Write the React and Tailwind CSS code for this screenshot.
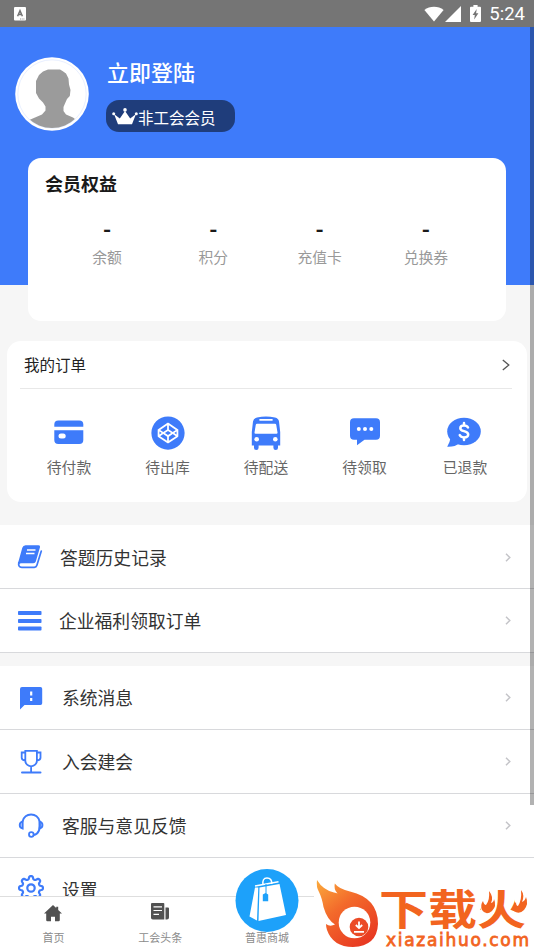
import { AiFillCodepenCircle } from 'react-icons/ai';

const STATS = ['余额', '积分', '充值卡', '兑换券'];

// ── Status bar ────────────────────────────────────────────────
const StatusBar = () => (
  <div className="flex h-[27px] items-center justify-between bg-[#757575] pl-[14px] pr-[9px] text-white">
    <svg className="h-[14px] w-3" viewBox="0 0 12 14">
      <rect width="12" height="13.5" rx="1" fill="#fff" />
      <path d="M3.6 9.2L6 3.6l2.4 5.6M4.4 7.6h3.2" fill="none" stroke="#757575" strokeWidth="1.5" />
      <path d="M6 12h5" stroke="#757575" strokeWidth="0.8" strokeDasharray="1 0.7" />
    </svg>
    <div className="flex items-center">
      <svg className="h-4 w-5" viewBox="0 0 20 16">
        <path d="M0.4 4C5.6-.3 14.4-.3 19.6 4L10 15.6z" fill="#fff" />
      </svg>
      <svg className="ml-[1px] h-4 w-4" viewBox="0 0 16 16">
        <path d="M16 0v16H0z" fill="#fff" />
      </svg>
      <svg className="ml-[9px] h-[17px] w-[11px]" viewBox="0 0 11 17">
        <path d="M3.4 0h4.2v1.8H10q1 0 1 1V16q0 1-1 1H1q-1 0-1-1V2.8q0-1 1-1h2.4z" fill="#fff" />
        <path d="M6.7 4L2.6 10h2.2l-.6 4.4L8.4 8.3H6.1z" fill="#757575" />
      </svg>
      <span className="ml-[8px] pt-[2px] font-['Roboto',sans-serif] text-[18.5px] leading-[25px]">5:24</span>
    </div>
  </div>
);

// ── Profile ───────────────────────────────────────────────────
const Avatar = () => (
  <svg className="h-[74px] w-[74px] shrink-0" viewBox="0 0 74 74">
    <clipPath id="face"><circle cx="37" cy="37" r="34" /></clipPath>
    <circle cx="37" cy="37" r="36.8" fill="#fff" />
    <circle cx="37" cy="37" r="34.2" fill="none" stroke="#d8e4ff" strokeWidth="0.6" />
    <path
      clipPath="url(#face)"
      d="M33 12.500h12l2.500 1.500 3.500 2.500 2.500 5 .5 6 1.500 5.500-.7 6-2.800 3-2 4.500-1.500 3.500v4l2.500 3.500 7 3 6 4.500V73H12v-9l8-3.500 7-3 3.500-4v-4l-2.500-4-4-4-3-5.500V24l3-6 4-3.500z"
      fill="#9b9b9b"
    />
  </svg>
);

const Crown = () => (
  <svg className="h-[17px] w-[26px]" viewBox="0 0 26 17" fill="#fff">
    <path d="M2 6l5.800 4.500L13 3l5.200 7.500L24 6l-4 10.300H6z" />
    <circle cx="1.700" cy="5.800" r="1.500" />
    <circle cx="13" cy="1.900" r="1.800" />
    <circle cx="24.300" cy="5.800" r="1.500" />
  </svg>
);

const Profile = () => (
  <div className="flex h-[131px] items-start pl-[15px] pt-[30px]">
    <Avatar />
    <div className="ml-[17px]">
      <p className="-mt-[2px] ml-[1px] text-[22px] font-medium leading-[32px] text-white">立即登陆</p>
      <div className="mt-[13px] flex h-8 w-[129px] items-center rounded-[13px] bg-[#1f3d7b] pl-[6px] text-white">
        <Crown />
        <span className="pt-[1px] text-[15.500px] leading-8">非工会会员</span>
      </div>
    </div>
  </div>
);

const Benefits = () => (
  <div className="mx-[28px] h-[163px] rounded-[13px] bg-white">
    <h2 className="pl-[17px] pt-[12px] text-[18px] font-bold leading-[26px] text-[#1a1a1a]">会员权益</h2>
    <div className="mt-[17px] grid grid-cols-4 pl-[26px] pr-[27px] text-center">
      {STATS.map(label => (
        <div key={label}>
          <p className="text-[22px] font-bold leading-[28px] text-[#1a1a1a]">-</p>
          <p className="pt-[2px] text-[14.800px] leading-[28px] text-[#999]">{label}</p>
        </div>
      ))}
    </div>
  </div>
);

// ── Orders ────────────────────────────────────────────────────
const CardIcon = () => (
  <svg className="h-9 w-9" viewBox="0 0 36 36" fill="#3e7bfa">
    <path d="M3.300 11.800V9.500q0-4 4-4h21q4 0 4 4v2.300z" />
    <path fillRule="evenodd" d="M3.300 15.300h29v9.700q0 4-4 4h-21q-4 0-4-4zm6.700 3.200q-2.500 0-2.500 2.500T10 23.500h2.200q2.500 0 2.500-2.500t-2.500-2.500z" />
  </svg>
);

const BusIcon = () => (
  <svg className="h-9 w-9" viewBox="0 0 36 36">
    <path d="M3.800 30V17L5 6.500Q5.500 3.200 9 2.400q9-2 18 0 3.500 .8 4 4.100L32.200 17v13.500H30v2.300a2.200 2.200 0 0 1-4.600 0v-2.300H10.600v2.300a2.200 2.200 0 0 1-4.600 0v-2.300H3.800z" fill="#3e7bfa" />
    <path d="M12 4.900h12" stroke="#fff" strokeWidth="1.600" strokeLinecap="round" />
    <path d="M9 8.800h18q1 0 1.200 1l1.300 7.800q.1 1.200-1 1.200H7.500q-1.100 0-1-1.200l1.300-7.800q.2-1 1.200-1z" fill="#fff" />
    <circle cx="8.700" cy="24.300" r="2.300" fill="#fff" />
    <circle cx="27.300" cy="24.300" r="2.300" fill="#fff" />
  </svg>
);

const ChatIcon = () => (
  <svg className="h-9 w-9" viewBox="0 0 36 36">
    <path d="M7 3.300h22q4 0 4 4v13.500q0 4-4 4H17.500L10 30.300v-5.500H7q-4 0-4-4V7.300q0-4 4-4z" fill="#3e7bfa" />
    <g fill="#fff"><circle cx="11.800" cy="14" r="2" /><circle cx="18" cy="14" r="2" /><circle cx="24.300" cy="14" r="2" /></g>
  </svg>
);

const RefundIcon = () => (
  <svg className="ml-[-3px] h-9 w-9" viewBox="0 0 36 36">
    <ellipse cx="18" cy="16.500" rx="16.800" ry="13.700" fill="#3e7bfa" />
    <path d="M4.500 23q-.5 4-3.300 8.800 8 .3 12-3.500z" fill="#3e7bfa" />
    <path d="M22 12.500q-1-2-4-2-3.700 0-3.700 2.700 0 2 3.700 2.900 4.200 1 4.200 3.400 0 2.900-4.200 2.900-3.300 0-4.300-2.300M18 8v2.500m0 12V25" fill="none" stroke="#fff" strokeWidth="2.500" strokeLinecap="round" />
  </svg>
);

const ORDERS = [
  { label: '待付款', icon: <CardIcon /> },
  { label: '待出库', icon: <AiFillCodepenCircle className="-my-[1px] h-[38px] w-[38px] text-[#3e7bfa]" /> },
  { label: '待配送', icon: <BusIcon /> },
  { label: '待领取', icon: <ChatIcon /> },
  { label: '已退款', icon: <RefundIcon /> },
];

const Orders = () => (
  <div className="ml-[7px] mr-[7px] mt-[20px] h-[161px] rounded-[14px] bg-white pl-[13px] pr-[15px]">
    <div className="flex h-12 items-center justify-between border-b border-[#e8e8e8] pl-1 pr-[2px]">
      <span className="pt-[1px] text-[15.500px] text-[#222]">我的订单</span>
      <svg className="h-3 w-2" viewBox="0 0 8 12">
        <path d="M0.800 1l6 5-6 5" fill="none" stroke="#555" strokeWidth="1.300" />
      </svg>
    </div>
    <div className="mt-[26px] grid grid-cols-[98px_99px_98px_99px_102px]">
      {ORDERS.map(({ label, icon }) => (
        <div key={label} className="flex flex-col items-center">
          {icon}
          <span className="mt-[4px] text-[14.800px] leading-6 text-[#666]">{label}</span>
        </div>
      ))}
    </div>
  </div>
);

// ── Menu rows ─────────────────────────────────────────────────
const BookIcon = () => (
  <svg className="h-[26px] w-[26px]" viewBox="0 0 26 26">
    <path d="M8.500 1.200h13q2 0 1.500 2l-4.200 14.300q-.5 1.800-2.500 1.800H4.500q-2 0-2.500 1.200l-.8-2L5.300 3.700q.8-2.500 3.200-2.500z" fill="#3e7bfa" />
    <path d="M1.800 18.500q-.8 4.800 3 4.800h12.500q2 0 2.600-2L24.300 7" fill="none" stroke="#3e7bfa" strokeWidth="1.700" strokeLinecap="round" />
    <path d="M10 6h8.500M9 9.500h8.500" stroke="#fff" strokeWidth="1.400" />
  </svg>
);

const BarsIcon = () => (
  <svg className="h-[26px] w-[26px]" viewBox="0 0 26 26" fill="#3e7bfa">
    <rect x="1" y="3" width="23.500" height="4" rx="0.800" />
    <rect x="1" y="11" width="23.500" height="4" rx="0.800" />
    <rect x="1" y="18.500" width="23.500" height="4" rx="0.800" />
  </svg>
);

const NoticeIcon = () => (
  <svg className="h-[26px] w-[26px]" viewBox="0 0 26 26">
    <path d="M4 2h18.500q1.700 0 1.700 1.700v14.600q0 1.700-1.700 1.700H6.500L2 24.500V4q0-2 2-2z" fill="#3e7bfa" />
    <path d="M13.200 6.500v4m0 2.500v3" stroke="#fff" strokeWidth="2.200" />
  </svg>
);

const TrophyIcon = () => (
  <svg className="h-[26px] w-[26px]" viewBox="0 0 26 26" fill="none" stroke="#3e7bfa" strokeWidth="1.800">
    <path d="M7.300 1.800h11.600v9.900q0 4.500-5.800 5.600-5.800-1.100-5.800-5.600zM7.300 3.500H3.700v5.300q0 2.400 3.600 2.900M18.900 3.500h3.600v5.300q0 2.400-3.600 2.900M13.100 17.500V23" />
    <path d="M4 23.500h18.500" strokeWidth="2" strokeLinecap="round" />
  </svg>
);

const HeadsetIcon = () => (
  <svg className="h-[26px] w-[26px]" viewBox="0 0 26 26" fill="none" stroke="#3e7bfa" strokeWidth="1.800">
    <path d="M4.500 8.500q2-7 8.600-7t8.600 7q1.300 12-6 13.500" />
    <path d="M4.700 8.300v7.300q-3-.7-3-3.600t3-3.700zM21.500 8.300v7.300q3-.7 3-3.600t-3-3.700z" fill="#3e7bfa" fillOpacity="0.400" />
    <circle cx="13.300" cy="21.500" r="2.300" />
  </svg>
);

// eight-lobed outline, sampled around the circle
const GEAR_POINTS = Array.from({ length: 160 }, (_, i) => {
  const a = (i / 160) * Math.PI * 2;
  const r = 10.4 + 1.6 * Math.tanh(1.8 * Math.cos(8 * a));
  return `${(13 + r * Math.sin(a)).toFixed(2)},${(13 - r * Math.cos(a)).toFixed(2)}`;
}).join(' ');

const GearIcon = () => (
  <svg className="-mt-[3px] h-[26px] w-[26px] overflow-visible" viewBox="0 0 26 26" fill="none" stroke="#3e7bfa" strokeWidth="2.200">
    <polygon points={GEAR_POINTS} strokeLinejoin="round" />
    <circle cx="13" cy="13" r="3.700" />
  </svg>
);

const MENU_TOP = [
  { label: '答题历史记录', icon: <BookIcon />, gap: 'pl-[17px] gap-[17px] pt-[1px]' },
  { label: '企业福利领取订单', icon: <BarsIcon />, gap: 'pl-[17px] gap-[16px]' },
];

const MENU_BOTTOM = [
  { label: '系统消息', icon: <NoticeIcon />, gap: 'pl-[18px] gap-[18px]' },
  { label: '入会建会', icon: <TrophyIcon />, gap: 'pl-[18px] gap-[18px]' },
  { label: '客服与意见反馈', icon: <HeadsetIcon />, gap: 'pl-[18px] gap-[18px]' },
  { label: '设置', icon: <GearIcon />, gap: 'pl-[18px] gap-[18px]' },
];

const MenuRow = ({ label, icon, gap }) => (
  <div className={`flex h-[64px] shrink-0 items-center border-b border-[#d8d9dc] bg-white pr-[23px] ${gap}`}>
    {icon}
    <span className="flex-1 text-[17.800px] text-[#333]">{label}</span>
    <svg className="h-[9px] w-[6px]" viewBox="0 0 6 9">
      <path d="M1 0.700l3.800 3.800L1 8.300" fill="none" stroke="#c4c4c8" strokeWidth="1.500" />
    </svg>
  </div>
);

// ── Bottom tabs ───────────────────────────────────────────────
const HomeIcon = () => (
  <svg className="h-[18px] w-5" viewBox="0 0 20 18" fill="#515151">
    <path d="M10 1L1 9.600h2.200V16q0 1.200 1.200 1.200H8v-4.500h4v4.500h3.600q1.200 0 1.200-1.200V9.600H19l-3.800-3.700V2.800h-2v1.300z" />
  </svg>
);

const NewsIcon = () => (
  <svg className="-mt-[1px] h-[18px] w-5" viewBox="0 0 20 18">
    <path d="M2 0h11.500q.8 0 .8.800V16.500H2.800Q1 16.500 1 14.700V1q0-1 1-1zM15.500 4.500H18q1 0 1 1v9q0 2-2 2h-1.500z" fill="#515151" />
    <path d="M3.500 3.800h8.500M3.500 7.500h8.500M3.500 11.300h5.500" stroke="#fff" strokeWidth="1.200" />
  </svg>
);

const MallButton = () => (
  <svg className="absolute -top-[29px] left-1/2 h-16 w-16 -translate-x-1/2" viewBox="0 0 64 64">
    <circle cx="32" cy="32.500" r="31.500" fill="#1da1fa" />
    <path d="M28 17q-1-7 4-7t4.800 6" fill="none" stroke="#fff" strokeWidth="1.500" />
    <path d="M20 19.500l-5.500 29L22 52.500l1.300-33zM24.500 19.500L44.500 16l6.500 31L23.500 53z" fill="#fff" />
    <path d="M20 18l23.500-4.200" stroke="#fff" strokeWidth="1.500" />
    <path d="M31 16v10" stroke="#1da1fa" strokeWidth="1" />
    <path d="M30.500 25l2.700 1.500v6.700h-5.400v-6.700z" fill="#1da1fa" />
  </svg>
);

const TABS = [
  { label: '首页', icon: <HomeIcon /> },
  { label: '工会头条', icon: <NewsIcon /> },
  { label: '普惠商城', icon: <MallButton /> },
];

const TabBar = () => (
  <div className="relative grid h-[54px] shrink-0 grid-cols-5 border-t border-[#dedede] bg-white">
    {TABS.map(({ label, icon }) => (
      <div key={label} className="relative flex flex-col items-center pt-[7px]">
        <div className="h-[18px]">{icon}</div>
        <span className="relative mt-[7px] text-[11px] leading-4 text-[#8b8b8b]">{label}</span>
      </div>
    ))}
  </div>
);

// ── Site badge ────────────────────────────────────────────────
const SiteBadge = () => (
  <div className="absolute bottom-0 right-0 flex h-[74px] w-[220px] bg-white">
    <svg className="mt-[2px] h-[70px] w-[65px] shrink-0" viewBox="0 0 65 70">
      <defs>
        <linearGradient id="flame" x1="0" y1="0" x2="0.700" y2="1">
          <stop offset="0" stopColor="#fbab3c" />
          <stop offset="0.450" stopColor="#f36a2b" />
          <stop offset="1" stopColor="#e83a22" />
        </linearGradient>
      </defs>
      <path d="M3 2q6 10 17 12.500 2.500.5 3.500 1-4-4-2.700-10Q25 11 36 13.500 64 20 64 46 63 68 39 69 19 69 13 52q-1-3-1-6 4 3 9 .5-8-5-11.500-17.500Q8 20 5 14 2 9 3 2z" fill="url(#flame)" />
      <circle cx="40.500" cy="44.500" r="15.800" fill="#fff" />
      <circle cx="45" cy="49" r="9.300" fill="#eb4b27" />
      <path d="M45 43.500v5m-3.200-1.500l3.200 3 3.200-3M40 53.800h10" fill="none" stroke="#fff" strokeWidth="1.800" />
    </svg>
    <div className="relative flex flex-col text-[#f2641f]">
      <p className="mt-[12px] h-[44px] origin-top scale-y-[0.85] whitespace-nowrap font-['Noto_Sans_CJK_SC',sans-serif] text-[49px] font-bold leading-[46px]">下载火</p>
      {/* small flames standing on both sides of the last character */}
      <svg className="absolute left-[100px] top-[14px] h-7 w-[50px]" viewBox="0 0 50 28" fill="#f2641f">
        <path d="M2 2h13v22H2zM36 1h11v20H36z" fill="#fff" />
        <path d="M10 1q5 6 2 12 3-1 3-4 3 7-2 12-6 5-10-1-2-5 1-9 1 4 3 4 4-5 3-14z" />
        <path d="M42 0q4 5 1 12 3-1 4-5 3 7-2 13-5 5-10 1-2-5 2-9 0 4 2 4 4-6 3-16z" />
      </svg>
      <p className="pl-[7px] font-['DejaVu_Sans',sans-serif] text-[17px] leading-[16px] tracking-[1.700px] [-webkit-text-stroke:0.8px]">xiazaihuo.com</p>
    </div>
  </div>
);

export default function App() {
  return (
    <div className="relative flex h-[950px] w-[534px] flex-col overflow-hidden bg-[#f6f6f6] font-['Noto_Sans_CJK_SC',sans-serif]">
      <StatusBar />
      <div className="relative min-h-0 flex-1 overflow-hidden">
        <div className="h-[258px] bg-[#3e7bfa]">
          <Profile />
          <Benefits />
        </div>
        <div className="pt-[36px]">
          <Orders />
        </div>
        <div className="mt-[23px]">
          {MENU_TOP.map(row => <MenuRow key={row.label} {...row} />)}
        </div>
        <div className="mt-[13px]">
          {MENU_BOTTOM.map(row => <MenuRow key={row.label} {...row} />)}
        </div>
        <div className="absolute right-0 top-0 h-[778px] w-1 bg-black/30" />
      </div>
      <TabBar />
      <SiteBadge />
    </div>
  );
}
